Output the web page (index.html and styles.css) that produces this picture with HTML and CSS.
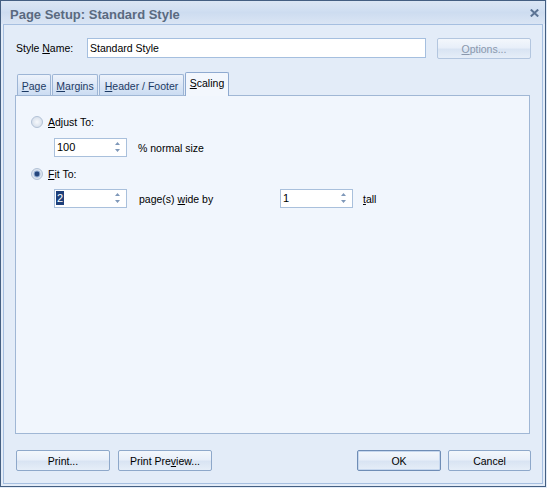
FILE: index.html
```html
<!DOCTYPE html>
<html>
<head>
<meta charset="utf-8">
<link rel="stylesheet" href="styles.css">
</head>
<body>
<div class="window">
  <div class="titlebar">
    <span class="title">Page Setup: Standard Style</span>
    <svg class="close" width="9" height="8" viewBox="0 0 9 8"><path d="M0.8 0.6 L8.2 7.4 M8.2 0.6 L0.8 7.4" stroke="#5b7394" stroke-width="2.1" fill="none"/></svg>
  </div>
  <div class="client">
    <div class="name-row">
      <span class="name-label">Style <u>N</u>ame:</span>
      <div class="textbox">Standard Style</div>
      <div class="btn options"><span><u>O</u>ptions...</span></div>
    </div>
    <div class="tabs">
      <div class="tab w-page"><span><u>P</u>age</span></div>
      <div class="tab w-margins"><span><u>M</u>argins</span></div>
      <div class="tab w-header"><span><u>H</u>eader / Footer</span></div>
      <div class="tab active w-scaling"><span><u>S</u>caling</span></div>
    </div>
    <div class="panel">
      <div class="opt-row">
        <svg class="radio" width="12" height="12" viewBox="0 0 12 12">
          <defs><radialGradient id="rg1" cx="0.5" cy="0.5" r="0.5"><stop offset="0" stop-color="#f7f9fc"/><stop offset="1" stop-color="#d6dfeb"/></radialGradient></defs>
          <circle cx="6" cy="6" r="5.5" fill="url(#rg1)" stroke="#b3c2d6"/>
        </svg>
        <span><u>A</u>djust To:</span>
      </div>
      <div class="spin-row first">
        <div class="spin"><span class="val">100</span>
          <svg class="arrows" width="5" height="17" viewBox="0 0 5 17"><path d="M2.5 3 L5 6 L0 6 Z M0 10 L5 10 L2.5 13 Z" fill="#7f98b9"/></svg>
        </div>
        <span class="spin-label">% normal size</span>
      </div>
      <div class="opt-row second">
        <svg class="radio" width="12" height="12" viewBox="0 0 12 12">
          <defs><radialGradient id="rg2" cx="0.5" cy="0.5" r="0.5"><stop offset="0" stop-color="#f7f9fc"/><stop offset="1" stop-color="#d6dfeb"/></radialGradient></defs>
          <circle cx="6" cy="6" r="5.5" fill="url(#rg2)" stroke="#b3c2d6"/>
          <circle cx="6" cy="6" r="3.4" fill="#8faad0"/>
          <circle cx="6" cy="6" r="2.4" fill="#25467c"/>
        </svg>
        <span><u>F</u>it To:</span>
      </div>
      <div class="spin-row third">
        <div class="spin"><span class="val sel">2</span>
          <svg class="arrows" width="5" height="17" viewBox="0 0 5 17"><path d="M2.5 3 L5 6 L0 6 Z M0 10 L5 10 L2.5 13 Z" fill="#7f98b9"/></svg>
        </div>
        <span class="spin-label wide">page(s) <u>w</u>ide by</span>
        <div class="spin flat"><span class="val">1</span>
          <svg class="arrows" width="5" height="17" viewBox="0 0 5 17"><path d="M2.5 3 L5 6 L0 6 Z M0 10 L5 10 L2.5 13 Z" fill="#7f98b9"/></svg>
        </div>
        <span class="tall"><u>t</u>all</span>
      </div>
    </div>
    <div class="buttons">
      <div class="btn b-print"><span>Print...</span></div>
      <div class="btn b-preview"><span>Print Pre<u>v</u>iew...</span></div>
      <div class="spacer"></div>
      <div class="btn default b-ok"><span>OK</span></div>
      <div class="btn b-cancel"><span>Cancel</span></div>
    </div>
  </div>
</div>
</body>
</html>
```
FILE: styles.css
```css
html, body {
  margin: 0;
  padding: 0;
  background: #e3ecf8;
  font-family: "Liberation Sans", Arial, sans-serif;
  font-size: 10.5px;
  color: #000;
}

.window {
  width: 546px;
  height: 487px;
  box-sizing: border-box;
  border: 1px solid #445f82;
  background: #e3ecf8;
  display: flex;
  flex-direction: column;
}

.titlebar {
  height: 23px;
  flex: none;
  display: flex;
  align-items: center;
  box-sizing: border-box;
  padding: 3px 0 0 9px;
  background: linear-gradient(#dbe6f4 0%, #d2e0f2 35%, #cddcf0 50%, #dae5f4 100%);
}

.title {
  font-weight: bold;
  font-size: 13px;
  color: #5a6a80;
}

.close {
  margin-left: auto;
  margin-right: 6px;
  align-self: flex-start;
  margin-top: 5px;
}

.client {
  flex: 1;
  margin: 0 2px 2px 2px;
  border: 1px solid #a6bfe0;
  display: flex;
  flex-direction: column;
  padding: 13px 11px 12px 11px;
  background: #e3ecf8;
}

.name-row {
  display: flex;
  align-items: flex-start;
  height: 21px;
  flex: none;
}

.name-label {
  width: 71px;
  margin-left: 1px;
  height: 20px;
  line-height: 20px;
}

.textbox {
  box-sizing: border-box;
  width: 339px;
  height: 20px;
  border: 1px solid #a5bfdf;
  background: #fff;
  padding-left: 2px;
  display: flex;
  align-items: center;
}

.btn {
  box-sizing: border-box;
  height: 21px;
  border: 1px solid #8ea8ca;
  border-radius: 2px;
  background: linear-gradient(#f3f7fc 0%, #e8eff9 45%, #d9e4f3 55%, #e6eef8 100%);
  display: flex;
  align-items: center;
  justify-content: center;
  color: #000;
  flex: none;
}

.options {
  width: 94px;
  margin-left: 11px;
  color: #8a98ad;
  border-color: #b3c6df;
}

.tabs {
  display: flex;
  align-items: flex-end;
  height: 23px;
  margin-top: 13px;
  padding-left: 2px;
  gap: 1px;
  position: relative;
  z-index: 1;
  flex: none;
}

.tab {
  box-sizing: border-box;
  height: 21px;
  border: 1px solid #9db5d5;
  border-bottom: none;
  border-radius: 2px 2px 0 0;
  background: linear-gradient(#eef3fb 0%, #dce7f6 50%, #cbdcf2 100%);
  color: #1c3a64;
  display: flex;
  align-items: center;
  justify-content: center;
  padding-top: 1px;
}

.tab.active {
  height: 24px;
  margin-bottom: -1px;
  background: #f3f7fd;
  border-color: #8faad0;
  color: #000;
  padding-top: 0;
  padding-bottom: 3px;
}

.w-page { width: 34px; }
.w-margins { width: 46px; }
.w-header { width: 85px; }
.w-scaling { width: 44px; }

.panel {
  flex: 1;
  margin-right: 1px;
  border: 1px solid #a0b7d5;
  background: #f1f6fd;
  padding: 20px 0 0 15px;
}

.opt-row {
  display: flex;
  align-items: center;
  height: 12px;
}

.opt-row.second {
  margin-top: 11px;
}

.radio {
  flex: none;
  margin-right: 5px;
}

.spin-row {
  display: flex;
  align-items: center;
  height: 19px;
}

.spin-row.first { margin-top: 10px; }
.spin-row.third { margin-top: 9px; }

.spin {
  box-sizing: border-box;
  width: 73px;
  height: 19px;
  border: 1px solid #a9c0dc;
  background: #fff;
  margin-left: 23px;
  display: flex;
  align-items: flex-start;
  padding-left: 2px;
  flex: none;
}

.spin.flat {
  margin-left: 0;
}

.val {
  height: 17px;
  line-height: 17px;
  font-size: 11px;
}

.val.sel {
  background: #1e3f7a;
  color: #fff;
  height: 14px;
  line-height: 14px;
  margin-top: 1px;
  padding: 0 1px;
  margin-left: -1px;
}

.arrows {
  margin-left: auto;
  margin-right: 6px;
}

.spin-label {
  margin-left: 11px;
}

.spin-label.wide {
  margin-left: 12px;
  width: 141px;
}

.tall {
  margin-left: 10px;
}

.buttons {
  display: flex;
  margin-top: 16px;
  padding-left: 1px;
  flex: none;
}

.b-print { width: 94px; }
.b-preview { width: 94px; margin-left: 8px; }
.spacer { flex: 1; }
.b-ok { width: 84px; }
.b-cancel { width: 83px; margin-left: 7px; }

.btn.default {
  border-color: #6f8db6;
  box-shadow: inset 0 0 0 1px #c6d7ee;
}
```
